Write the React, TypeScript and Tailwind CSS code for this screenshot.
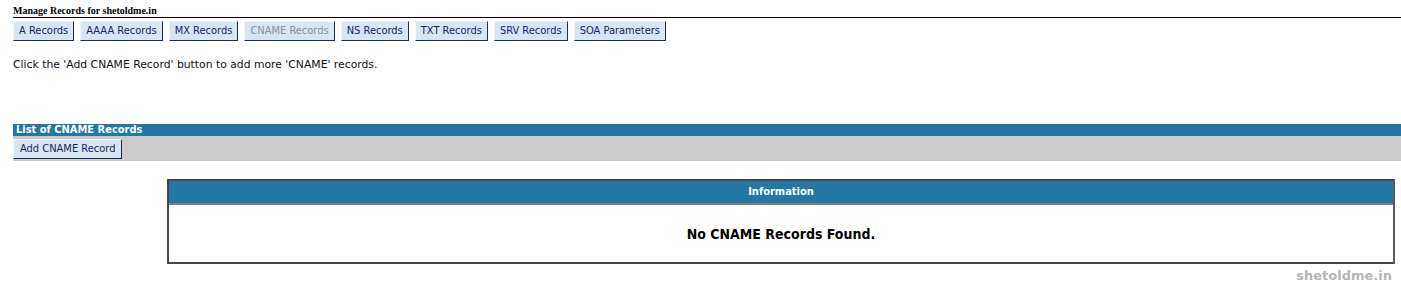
const tabs = [
  "A Records",
  "AAAA Records",
  "MX Records",
  "CNAME Records",
  "NS Records",
  "TXT Records",
  "SRV Records",
  "SOA Parameters",
];

const btn =
  "h-[20px] px-[5px] bg-[#d6e6f2] border border-t-[#eef5fb] border-l-[#eef5fb] border-r-[#1c2d5a] border-b-[#1c2d5a] text-[11px] leading-[18px] whitespace-nowrap";

export default function App() {
  return (
    <div className="w-[1401px] h-[288px] bg-white pl-[13px] pt-[5px] font-['DejaVu_Sans_Condensed','DejaVu_Sans',sans-serif] relative overflow-hidden">
      <div className="border-b border-black font-['Liberation_Serif',serif] font-bold text-[10px] leading-[11px] text-black pb-[1px]">
        Manage Records for shetoldme.in
      </div>
      <div className="flex gap-[6px] mt-[3px]">
        {tabs.map((t) => (
          <button
            key={t}
            className={btn + (t === "CNAME Records" ? " text-[#8a9099]" : " text-[#1c1c6a]")}
          >
            {t}
          </button>
        ))}
      </div>
      <p className="mt-[17px] text-[10.8px] leading-[14px] text-[#111] font-['DejaVu_Sans',sans-serif]">
        Click the 'Add CNAME Record' button to add more 'CNAME' records.
      </p>
      <div className="mt-[52px] bg-[#2277a5] text-white font-bold text-[11px] leading-[12px] h-[12px] pl-[3px]">
        List of CNAME Records
      </div>
      <div className="bg-[#cccccc] h-[25px] pt-[3px] flex items-start">
        <button className={btn + " text-[#1c1c6a] px-[6px]"}>Add CNAME Record</button>
      </div>
      <div className="ml-[154px] mr-[6px] mt-[18px] border-2 border-[#454545] border-r-[#5a5a5a]">
        <div className="bg-[#2277a5] h-[24px] border-b-2 border-[#7d7d7d] text-white font-bold text-[11px] leading-[22px] text-center">
          Information
        </div>
        <div className="h-[57px] flex items-center justify-center font-bold text-[14px] text-black pt-[1px]">
          No CNAME Records Found.
        </div>
      </div>
      <div className="absolute right-[9px] bottom-[4px] text-[13px] font-bold text-[#b5b5b5] font-['DejaVu_Sans',sans-serif] leading-[16px]">
        shetoldme.in
      </div>
    </div>
  );
}
